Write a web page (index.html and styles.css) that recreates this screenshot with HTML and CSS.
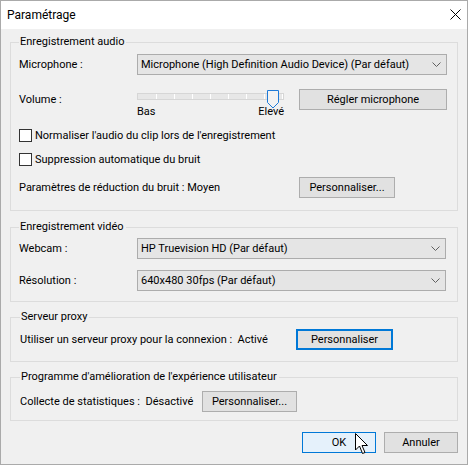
FILE: index.html
```html
<!DOCTYPE html>
<html lang="fr">
<head>
<meta charset="utf-8">
<title>Paramétrage</title>
<link rel="stylesheet" href="styles.css">
</head>
<body>
<div class="window">
  <div class="titlebar">
    <span class="title">Paramétrage</span>
    <svg class="close" width="11" height="11" viewBox="0 0 11 11"><path d="M0.5 0.5 L10.5 10.5 M10.5 0.5 L0.5 10.5" stroke="#000" stroke-width="1" fill="none"/></svg>
  </div>
  <div class="content">
    <fieldset class="group g-audio">
      <legend>Enregistrement audio</legend>
      <div class="row row-mic">
        <span class="label">Microphone :</span>
        <div class="combo"><span class="combo-text">Microphone (High Definition Audio Device) (Par défaut)</span><svg class="chev" width="9" height="5" viewBox="0 0 9 5"><path d="M0.5 0.5 L4.5 4.5 L8.5 0.5" stroke="#606060" fill="none"/></svg></div>
      </div>
      <div class="row row-volume">
        <span class="label">Volume :</span>
        <div class="slider">
          <div class="track"></div>
          <svg class="thumb" width="12" height="19" viewBox="0 0 12 19"><path d="M0.5 0.5 H11.5 V12.5 L6 18 L0.5 12.5 Z" fill="#f2f2f2" stroke="#1e7ad8"/></svg>
          <div class="slider-labels"><span>Bas</span><span>Elevé</span></div>
        </div>
        <button class="btn btn-regler">Régler microphone</button>
      </div>
      <div class="check check-1"><span class="box"></span><span>Normaliser l'audio du clip lors de l'enregistrement</span></div>
      <div class="check check-2"><span class="box"></span><span>Suppression automatique du bruit</span></div>
      <div class="row row-noise">
        <span class="txt txt-noise">Paramètres de réduction du bruit : Moyen</span>
        <button class="btn btn-noise">Personnaliser...</button>
      </div>
    </fieldset>

    <fieldset class="group g-video">
      <legend>Enregistrement vidéo</legend>
      <div class="row row-webcam">
        <span class="label">Webcam :</span>
        <div class="combo combo-v"><span class="combo-text">HP Truevision HD (Par défaut)</span><svg class="chev" width="9" height="5" viewBox="0 0 9 5"><path d="M0.5 0.5 L4.5 4.5 L8.5 0.5" stroke="#606060" fill="none"/></svg></div>
      </div>
      <div class="row row-res">
        <span class="label">Résolution :</span>
        <div class="combo combo-v"><span class="combo-text">640x480 30fps (Par défaut)</span><svg class="chev" width="9" height="5" viewBox="0 0 9 5"><path d="M0.5 0.5 L4.5 4.5 L8.5 0.5" stroke="#606060" fill="none"/></svg></div>
      </div>
    </fieldset>

    <fieldset class="group g-proxy">
      <legend>Serveur proxy</legend>
      <div class="row row-proxy">
        <span class="txt txt-proxy">Utiliser un serveur proxy pour la connexion :&nbsp; Activé</span>
        <button class="btn btn-proxy">Personnaliser</button>
      </div>
    </fieldset>

    <fieldset class="group g-stats">
      <legend>Programme d'amélioration de l'expérience utilisateur</legend>
      <div class="row row-stats">
        <span class="txt txt-stats">Collecte de statistiques :&nbsp; Désactivé</span>
        <button class="btn btn-stats">Personnaliser...</button>
      </div>
    </fieldset>

    <div class="footer">
      <div class="btn btn-ok">OK
        <svg class="cursor" width="14" height="22" viewBox="0 0 14 22"><path d="M0.5 0.5 V17 L4.5 13 L7.5 20.5 L10 19.5 L7 12.5 L12.5 12.5 Z" fill="#fff" stroke="#000" stroke-linejoin="round"/></svg>
      </div>
      <button class="btn btn-cancel">Annuler</button>
    </div>
  </div>
</div>
</body>
</html>
```

FILE: styles.css
```css
* { box-sizing: border-box; }
html, body { margin: 0; padding: 0; }
body {
  font-family: Roboto, "Noto Sans", sans-serif;
  font-size: 11px;
  color: #000;
  background: #f0f0f0;
}
.window {
  width: 468px;
  height: 465px;
  border: 1px solid #aaaaaa;
  background: #f0f0f0;
  display: flex;
  flex-direction: column;
}
.titlebar {
  height: 28px;
  background: #fff;
  display: flex;
  align-items: center;
  justify-content: space-between;
  padding: 0 6px 0 6px;
  flex: none;
}
.title { font-size: 12px; line-height: 16px; }
.close { display: block; margin-top: -1px; }

.content {
  padding: 5px 9px 0 9px;
  display: flex;
  flex-direction: column;
}
.group {
  margin: 0;
  border: 1px solid #dcdcdc;
  padding: 0 10px 0 8px;
  min-width: 0;
  display: flex;
  flex-direction: column;
}
.group legend {
  padding: 0 2px 0 1px;
  margin-left: 0;
  line-height: 16px;
  height: 16px;
}
.row { display: flex; align-items: center; }
.label { width: 118px; flex: none; }
.txt { flex: none; white-space: nowrap; }

.combo {
  width: 310px;
  height: 21px;
  background: #e5e5e5;
  border: 1px solid #acacac;
  display: flex;
  align-items: center;
  justify-content: space-between;
  padding: 0 5px 0 3px;
  white-space: nowrap;
}
.combo-v { width: 309px; }
.chev { display: block; }

.btn {
  font: inherit;
  color: #000;
  height: 21px;
  background: #e1e1e1;
  border: 1px solid #adadad;
  border-radius: 0;
  padding: 0;
  margin: 0;
  display: flex;
  align-items: center;
  justify-content: center;
  flex: none;
}

/* audio group */
.g-audio { padding-bottom: 12px; }
.row-mic { margin-top: 4px; height: 21px; }
.row-volume { margin-top: 14px; height: 30px; align-items: flex-start; }
.row-volume .label { margin-top: 4px; }
.slider {
  position: relative;
  width: 147px;
  height: 30px;
  flex: none;
}
.track {
  margin-top: 4px;
  height: 7px;
  border: 1px solid #d6d6d6;
  background-color: #e7e7e7;
  background-image: repeating-linear-gradient(to right, transparent 0, transparent 17px, #ffffff 17px, #ffffff 18px);
  background-position: 1px 0;
}
.thumb { position: absolute; left: 130px; top: 1px; }
.slider-labels {
  display: flex;
  justify-content: space-between;
  margin-top: 5px;
  line-height: 14px;
}
.btn-regler { width: 148px; margin-left: 15px; }

.check { display: flex; align-items: center; height: 16px; }
.check-1 { margin-top: 8px; }
.check-2 { margin-top: 8px; }
.box {
  width: 13px;
  height: 13px;
  border: 1px solid #333;
  background: #fff;
  margin-right: 3px;
  flex: none;
}
.row-noise { margin-top: 10px; height: 21px; }
.txt-noise { width: 280px; }
.btn-noise { width: 96px; }

/* video group */
.g-video { margin-top: 8px; padding-bottom: 10px; }
.row-webcam { margin-top: 3px; height: 21px; }
.row-res { margin-top: 11px; height: 21px; }

/* proxy */
.g-proxy { margin-top: 7px; padding-left: 9px; padding-bottom: 11px; }
.row-proxy { margin-top: 4px; height: 21px; }
.txt-proxy { width: 276px; }
.btn-proxy { width: 97px; border: 2px solid #0078d7; }

/* stats */
.g-stats { margin-top: 7px; padding-left: 9px; padding-bottom: 8px; }
.row-stats { margin-top: 6px; height: 21px; }
.txt-stats { width: 182px; }
.btn-stats { width: 95px; }

/* footer */
.footer {
  display: flex;
  justify-content: flex-end;
  gap: 8px;
  margin-top: 11px;
}
.btn-ok {
  width: 74px;
  background: #e5f1fb;
  border-color: #0078d7;
  position: relative;
}
.cursor { position: absolute; left: 52px; top: 0px; }
.btn-cancel { width: 74px; }
```
